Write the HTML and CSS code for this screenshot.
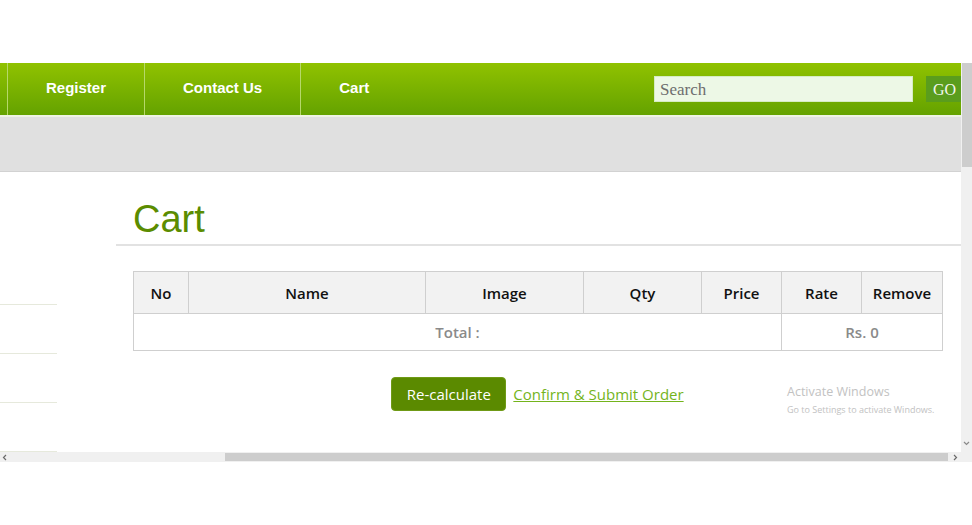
FILE: index.html
```html
<!DOCTYPE html>
<html>
<head>
<meta charset="utf-8">
<link rel="stylesheet" href="styles.css">
</head>
<body>
<div class="top-space"></div>
<div class="window">
  <div class="viewport-row">
    <div class="page">
      <header class="nav">
        <div class="nav-stub"></div>
        <a class="nav-item">Register</a>
        <a class="nav-item">Contact Us</a>
        <a class="nav-item last">Cart</a>
        <div class="nav-fill"></div>
        <form class="search">
          <input class="search-input" type="text" placeholder="Search">
          <button class="search-go" type="button">GO</button>
        </form>
      </header>
      <div class="banner"></div>
      <div class="content">
        <aside class="sidebar">
          <div class="side-item"></div>
          <div class="side-item"></div>
          <div class="side-item"></div>
          <div class="side-item"></div>
        </aside>
        <main class="main">
          <h1 class="title">Cart</h1>
          <table class="cart">
            <colgroup>
              <col class="c-no"><col class="c-name"><col class="c-image"><col class="c-qty"><col class="c-price"><col class="c-rate"><col class="c-remove">
            </colgroup>
            <thead>
              <tr><th>No</th><th>Name</th><th>Image</th><th>Qty</th><th>Price</th><th>Rate</th><th>Remove</th></tr>
            </thead>
            <tbody>
              <tr><td colspan="5">Total :</td><td colspan="2">Rs. 0</td></tr>
            </tbody>
          </table>
          <div class="actions">
            <button class="btn" type="button">Re-calculate</button>
            <a class="confirm" href="#">Confirm &amp; Submit Order</a>
          </div>
        </main>
      </div>
      <div class="watermark">
        <div class="wm-title">Activate Windows</div>
        <div class="wm-sub">Go to Settings to activate Windows.</div>
      </div>
    </div>
    <div class="vscroll">
      <div class="vthumb"></div>
      <svg class="arrow-down" width="7" height="5" viewBox="0 0 7 5"><path d="M1 1 L3.5 3.5 L6 1" fill="none" stroke="#8a8a8a" stroke-width="1.2"/></svg>
    </div>
  </div>
  <div class="hscroll-row">
    <div class="hscroll">
      <svg class="arrow-left" width="5" height="7" viewBox="0 0 5 7"><path d="M4 1 L1.5 3.5 L4 6" fill="none" stroke="#6a6a6a" stroke-width="1.2"/></svg>
      <div class="hgap"></div>
      <div class="hthumb"></div>
      <svg class="arrow-right" width="5" height="7" viewBox="0 0 5 7"><path d="M1 1 L3.5 3.5 L1 6" fill="none" stroke="#6a6a6a" stroke-width="1.2"/></svg>
    </div>
    <div class="corner"></div>
  </div>
</div>
</body>
</html>
```
FILE: styles.css
```css
html, body {
  margin: 0;
  padding: 0;
  background: #ffffff;
}

.top-space {
  height: 63px;
}

.window {
  width: 972px;
  height: 399px;
  display: flex;
  flex-direction: column;
}

.viewport-row {
  height: 389px;
  display: flex;
}

.page {
  position: relative;
  width: 961px;
  height: 389px;
  overflow: hidden;
  background: #ffffff;
}

/* NAV */
.nav {
  height: 52px;
  border-bottom: 2px solid #eef3e4;
  background: linear-gradient(#90c200, #64a200);
  display: flex;
  align-items: stretch;
  font-family: "Liberation Sans", Arial, sans-serif;
}

.nav-stub {
  width: 7px;
}

.nav-item {
  display: flex;
  align-items: center;
  padding: 0 38px 4px 38px;
  border-left: 1px solid #b6d86a;
  color: #ffffff;
  font-weight: bold;
  font-size: 15px;
  cursor: pointer;
}

.nav-fill {
  flex: 1;
}

.search {
  display: flex;
  align-items: flex-start;
  padding-top: 13px;
  margin: 0;
}

.search-input {
  box-sizing: border-box;
  width: 259px;
  height: 26px;
  margin: 0 13px 0 0;
  padding: 2px 5px 0;
  border: 1px solid #d6ecc4;
  background: #edf8e6;
  font-family: "Liberation Serif", Georgia, serif;
  font-size: 17px;
  color: #555;
  outline: none;
}

.search-input::placeholder {
  color: #6e6e6e;
}

.search-go {
  box-sizing: border-box;
  width: 40px;
  height: 26px;
  margin: 0 -5px 0 0;
  padding: 1px 0 0 7px;
  border: none;
  background: #5a9d1d;
  color: #f2f6ec;
  font-family: "Liberation Serif", Georgia, serif;
  font-size: 16px;
  text-align: left;
  flex-shrink: 0;
}

/* BANNER */
.banner {
  height: 54px;
  background: #e0e0e0;
  border-bottom: 1px solid #d2d2d2;
}

/* CONTENT */
.content {
  display: flex;
}

.sidebar {
  width: 57px;
  padding-top: 84px;
  margin-right: 59px;
}

.side-item {
  height: 48px;
  border-bottom: 1px solid #e6e9dc;
}

.main {
  flex: 1;
}

.title {
  margin: 0;
  padding: 25px 0 3px 17px;
  border-bottom: 2px solid #e2e2e2;
  font-family: "Liberation Sans", Arial, sans-serif;
  font-weight: normal;
  font-size: 38px;
  line-height: 44px;
  color: #5b8c00;
}

.cart {
  margin: 25px 0 0 17px;
  width: 809px;
  table-layout: fixed;
  border-collapse: collapse;
  font-family: "Open Sans", sans-serif;
  font-size: 15px;
}

.c-no { width: 55px; }
.c-name { width: 237px; }
.c-image { width: 158px; }
.c-qty { width: 118px; }
.c-price { width: 80px; }
.c-rate { width: 80px; }
.c-remove { width: 81px; }

.cart th {
  height: 41px;
  padding: 0;
  border: 1px solid #cfcfcf;
  background: #f2f2f2;
  color: #111;
  font-weight: 600;
  text-align: center;
}

.cart td {
  height: 36px;
  padding: 0;
  border: 1px solid #cfcfcf;
  background: #ffffff;
  color: #8a8a8a;
  font-weight: 600;
  text-align: center;
}

.actions {
  width: 809px;
  margin: 26px 0 0 17px;
  display: flex;
  justify-content: center;
  align-items: center;
  gap: 7px;
}

.btn {
  box-sizing: border-box;
  width: 115px;
  height: 34px;
  padding: 0;
  border: 1px solid #6f9a16;
  border-radius: 4px;
  background: #5b8a00;
  color: #ffffff;
  font-family: "Open Sans", sans-serif;
  font-size: 15px;
}

.confirm {
  color: #74b41c;
  font-family: "Open Sans", sans-serif;
  font-size: 15px;
  text-decoration: underline;
}

/* WATERMARK */
.watermark {
  position: absolute;
  left: 787px;
  top: 320px;
  font-family: "Open Sans", sans-serif;
  color: #c2c2c2;
  pointer-events: none;
}

.wm-title {
  font-size: 12.5px;
  line-height: 18px;
}

.wm-sub {
  font-size: 9px;
  line-height: 14px;
  margin-top: 2px;
}

/* SCROLLBARS */
.vscroll {
  width: 11px;
  height: 389px;
  background: #f0f0f0;
  display: flex;
  flex-direction: column;
  align-items: flex-end;
}

.vthumb {
  width: 10px;
  height: 104px;
  background: #cdcdcd;
}

.arrow-down {
  margin-top: auto;
  margin-bottom: 6px;
  margin-right: 2px;
}

.hscroll-row {
  height: 10px;
  display: flex;
}

.hscroll {
  width: 961px;
  height: 10px;
  background: #f0f0f0;
  display: flex;
  align-items: center;
}

.arrow-left {
  margin-left: 2px;
}

.hgap {
  width: 218px;
}

.hthumb {
  width: 723px;
  height: 8px;
  background: #cdcdcd;
}

.arrow-right {
  margin-left: 5px;
}

.corner {
  width: 11px;
  height: 10px;
  background: #f0f0f0;
}
```
